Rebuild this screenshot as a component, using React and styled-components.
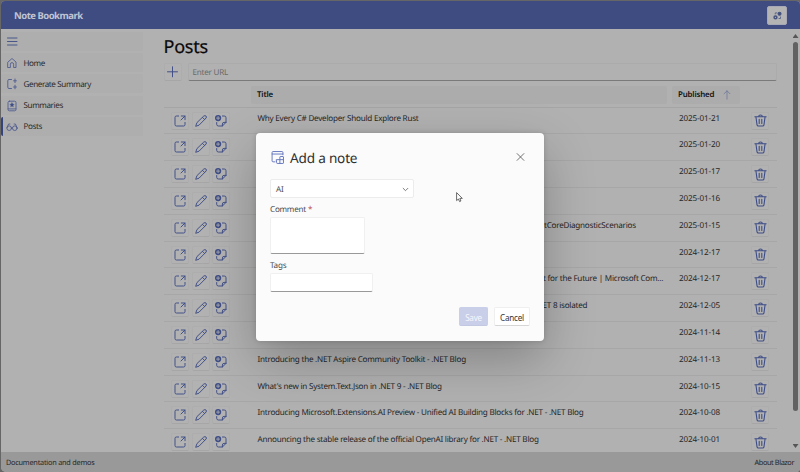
import React from 'react';
import styled, { createGlobalStyle } from 'styled-components';

const Global = createGlobalStyle`
  * { box-sizing: border-box; }
  body { margin: 0; background: #5c5c5c; overflow: hidden; }
  button, input, textarea { font: inherit; color: inherit; letter-spacing: inherit; }
`;

const blue = '#3d4c86';

const Shell = styled.div`
  position: relative;
  width: 800px;
  height: 472px;
  padding: 1px 0 0 1px;
  background: #666;
  font-family: 'Noto Sans', 'Open Sans', sans-serif;
  font-size: 8.1px;
  letter-spacing: -0.235px;
  text-rendering: geometricPrecision;
  color: #262626;
`;
const Frame = styled.div`
  display: flex;
  flex-direction: column;
  height: 471px;
  background: #b1b1b1;
  border-radius: 4px 4px 4px 5px;
  overflow: hidden;
`;
const Header = styled.header`
  flex: none;
  height: 28px;
  display: flex;
  align-items: center;
  justify-content: space-between;
  padding: 0 13px;
  background: #3e4c81;
`;
const Brand = styled.div`
  color: #c0c4d3;
  font-size: 9.5px;
  font-weight: 700;
  letter-spacing: -0.5px;
`;
const Settings = styled.button`
  width: 20px;
  height: 19px;
  padding: 0;
  display: grid;
  place-items: center;
  border: 1px solid #a6a9b5;
  border-radius: 2px;
  background: #b4b4b4;
`;
const Body = styled.div`
  flex: 1;
  min-height: 0;
  display: flex;
`;
const Nav = styled.nav`
  width: 142px;
  padding-top: 3px;
  display: flex;
  flex-direction: column;
  gap: 2.1px;
`;
const NavItem = styled.a`
  height: 19.1px;
  display: flex;
  align-items: center;
  gap: 5.5px;
  padding: 1px 0 0 3px;
  border-radius: 2px;
  background: #aeaeae;
  border-left: 2px solid ${(p) => (p.$active ? '#35437b' : 'transparent')};
  color: #2b2b2b;
  font-size: 8.1px;
  letter-spacing: -0.4px;
  svg { flex: none; }
`;
const Main = styled.main`
  flex: 1;
  min-width: 0;
  overflow: hidden;
  padding: 6px 15px 0 20.5px;
`;
const Title = styled.h1`
  margin: 0;
  height: 28px;
  line-height: 25px;
  font-size: 18px;
  font-weight: 400;
  -webkit-text-stroke: 0.2px #090909;
  letter-spacing: -0.25px;
  color: #090909;
`;
const AddRow = styled.div`
  display: flex;
  gap: 6px;
  height: 18px;
`;
const IconButton = styled.button`
  flex: none;
  width: 18px;
  height: 18px;
  padding: 0;
  display: grid;
  place-items: center;
  background: #b2b2b2;
  border: 1px solid #adadad;
  border-bottom-color: #a6a6a6;
  border-radius: 2px;
`;
const UrlField = styled.div`
  flex: 1;
  display: flex;
  align-items: center;
  padding: 1px 0 0 4px;
  color: #6a6a6a;
  border: 1px solid #ababab;
  border-bottom-color: #7a7a7a;
  border-radius: 2px;
`;
const Columns = styled.div`
  display: grid;
  grid-template-columns: 87px 416.5px 4.5px 68px 1fr;
  padding-top: 5px;
  height: 26.5px;
  border-bottom: 1px solid #a5a5a5;
`;
const ColumnHead = styled.div`
  grid-column: ${(p) => p.$col};
  height: 18px;
  display: flex;
  align-items: center;
  justify-content: space-between;
  padding: 0 8px 0 6.5px;
  background: #acacac;
  border-radius: 2px;
  font-size: 7.9px;
  font-weight: 600;
  letter-spacing: -0.17px;
  color: #111;
`;
const Row = styled.div`
  display: grid;
  grid-template-columns: 7.5px 86.5px 421.5px 72px 1fr;
  height: 26.82px;
  padding-top: 4px;
  border-bottom: 1px solid #a7a7a7;
`;
const Actions = styled.div`
  grid-column: 2;
  display: flex;
  gap: 2.7px;
`;
const Cell = styled.div`
  line-height: 13px;
  white-space: nowrap;
  padding-left: ${(p) => p.$indent || 0}px;
`;
const DateCell = styled(Cell)`
  letter-spacing: -0.13px;
`;
const Scrollbar = styled.div`
  width: 8px;
  display: flex;
  flex-direction: column;
  align-items: center;
  padding: 5px 1px 4px 0;
`;
const Arrow = styled.i`
  width: 6px;
  height: 4px;
  background: #565656;
  clip-path: ${(p) => (p.$down ? 'polygon(0 0, 100% 0, 50% 100%)' : 'polygon(50% 0, 100% 100%, 0 100%)')};
`;
const Thumb = styled.div`
  width: 5px;
  height: 369px;
  margin: 4px 0 auto;
  border-radius: 3px;
  background: #626262;
`;
const Footer = styled.footer`
  flex: none;
  height: 20px;
  display: flex;
  justify-content: space-between;
  align-items: center;
  padding: 1px 6px 0 5px;
  background: #999;
  font-size: 7.3px;
  letter-spacing: -0.27px;
`;
const FootNote = styled.span`
  letter-spacing: ${(p) => p.$ls}px;
`;
const Dialog = styled.section`
  position: absolute;
  left: 256px;
  top: 133px;
  width: 288px;
  height: 207.5px;
  display: flex;
  flex-direction: column;
  padding: 14px 14px 14.5px;
  border-radius: 4px;
  background: #fbfbfb;
  box-shadow: 0 19px 50px rgba(0, 0, 0, 0.26), 0 0 5px rgba(0, 0, 0, 0.16);
  color: #4c4c4c;
`;
const DialogHead = styled.div`
  height: 20px;
  display: flex;
  align-items: center;
  padding: 0 5px 0 1px;
`;
const DialogTitle = styled.h2`
  flex: 1;
  margin: 1px 0 0 6px;
  font-size: 13.6px;
  letter-spacing: -0.2px;
  line-height: 20px;
  font-weight: 400;
  color: #303030;
`;
const Select = styled.div`
  width: 143.5px;
  height: 19px;
  margin-top: 12px;
  display: flex;
  align-items: center;
  justify-content: space-between;
  padding: 1px 4px 0 5px;
  background: #fff;
  border: 1px solid #ececec;
  border-radius: 2px;
`;
const Label = styled.label`
  height: 11px;
  line-height: 11px;
  margin: ${(p) => p.$top}px 0 ${(p) => p.$bottom}px;
  span { color: #b9494c; }
`;
const Field = styled.div`
  flex: none;
  width: ${(p) => p.$w}px;
  height: ${(p) => p.$h}px;
  background: #fff;
  border: 1px solid #f0f0f0;
  border-bottom-color: #999;
  border-radius: 2px;
`;
const Buttons = styled.div`
  margin-top: auto;
  display: flex;
  justify-content: flex-end;
  gap: 6px;
`;
const Button = styled.button`
  width: ${(p) => (p.$primary ? 29 : 36)}px;
  height: 19px;
  padding: 1px 0 0;
  border-radius: 2px;
  border: 1px solid ${(p) => (p.$primary ? '#c9cfe8' : '#efefef')};
  border-bottom-color: ${(p) => (p.$primary ? '#c2c8e2' : '#d6d6d6')};
  background: ${(p) => (p.$primary ? '#c9cfe8' : '#fff')};
  color: ${(p) => (p.$primary ? '#f6f7fd' : '#333')};
`;
const Pointer = styled.svg`
  position: absolute;
  left: 456px;
  top: 192px;
`;

const Svg = ({ s = 12, w = 1, children, color = blue }) => (
  <svg width={s} height={s} viewBox="0 0 12 12" fill="none" stroke={color} strokeWidth={w} strokeLinecap="round" strokeLinejoin="round">
    {children}
  </svg>
);
const MenuIcon = () => <Svg><path d="M1.500 2h9.500M1.500 5.500h9.500M1.500 9h9.500" strokeWidth=".9" /></Svg>;
const HomeIcon = () => (
  <Svg w={0.9} color="#515e91"><path d="M2 5 6 1.500 10 5v5.500H7.600V7.200a1.600 1.600 0 0 0-3.200 0v3.300H2z" /></Svg>
);
const GenerateIcon = () => (
  <Svg w={0.95} color="#515e91">
    <path d="M5.500 1.500H3A1.200 1.200 0 0 0 1.800 2.700v6.600A1.200 1.200 0 0 0 3 10.500h2.500" />
    <path d="M9 1v3.600M7.600 2.800h2.800M9 7.200v3.600M7.600 9h2.800" />
  </Svg>
);
const SummaryIcon = () => (
  <Svg w={0.9} color="#515e91">
    <rect x="2" y="1.200" width="8" height="9.600" rx="1.400" />
    <path d="M2.200 8.900h7.600" />
    <path d="m6 2.800.7 1.300 1.400.2-1 1 .2 1.500L6 6.100l-1.300.7.2-1.500-1-1 1.400-.2z" fill={blue} strokeWidth=".5" />
  </Svg>
);
const GlassesIcon = () => (
  <Svg w={0.9} color="#515e91">
    <circle cx="3.200" cy="7.200" r="2.300" /><circle cx="8.800" cy="7.200" r="2.300" />
    <path d="M5.500 7h1M.9 6.800 2.600 3h1.300M11.100 6.800 9.400 3H8.100" />
  </Svg>
);
const OpenIcon = () => (
  <Svg w={0.95}>
    <path d="M4.600 1H2.400A1.400 1.400 0 0 0 1 2.400v7.200A1.400 1.400 0 0 0 2.400 11h7.200A1.400 1.400 0 0 0 11 9.600V7.400" />
    <path d="M7.300 1H11v3.700M11 1 7 5" />
  </Svg>
);
const EditIcon = () => (
  <Svg w={0.95}>
    <path d="M9 .9a1.500 1.500 0 0 1 2.100 2.100L4 10.200.7 11.300 1.800 8zM7.500 2.400l2.100 2.100" />
  </Svg>
);
const NoteIcon = () => (
  <Svg w={0.95}>
    <path d="M7.400 1h1.800A1.700 1.700 0 0 1 11 2.700V7.400L7.400 11H3.400A1.700 1.700 0 0 1 1.700 9.300V7.500M11 7.400H9A1.600 1.600 0 0 0 7.400 9v2" />
    <circle cx="3.100" cy="3.100" r="3.100" fill={blue} stroke="none" />
    <path d="M3.100 1.500v3.200M1.500 3.100h3.200" stroke="#b1b1b1" strokeWidth=".8" />
  </Svg>
);
const TrashIcon = () => (
  <Svg s={13}>
    <path d="M.8 2.600h10.400M4.300 2.500a1.700 1.600 0 0 1 3.400 0M1.800 2.800l1 7.200a1.200 1.200 0 0 0 1.200 1h4a1.200 1.200 0 0 0 1.200-1l1-7.200M4.800 4.800v4M7.200 4.800v4" />
  </Svg>
);
const PlusIcon = () => <Svg w={0.95}><path d="M5.500.8v10M.5 5.800h10" /></Svg>;
const GearsIcon = () => (
  <Svg s={9} color="#46547f">
    <circle cx="3.300" cy="8.400" r="1.900" strokeWidth="2" />
    <circle cx="8.700" cy="3.600" r="2" fill={blue} strokeWidth="1.400" />
    <path d="M3 4V2.500h2M10 8v2H8" />
  </Svg>
);
const WindowIcon = () => (
  <Svg s={13} w={0.9} color="#6778bf">
    <path d="M3.700 10H1.900A.9.900 0 0 1 1 9.100V1.400A.9.900 0 0 1 1.900.5h8.200a.9.900 0 0 1 .9.900v2.100M1 2.800h10" />
    <path d="M5.200 8h6.300v3a.5.500 0 0 1-.5.500H5.700a.5.500 0 0 1-.5-.5zM8.200 11.500V5.500a.4.400 0 0 1 .4-.4h2.500a.4.400 0 0 1 .4.400V8" />
  </Svg>
);

const navItems = [
  { icon: <MenuIcon /> },
  { icon: <HomeIcon />, text: 'Home' },
  { icon: <GenerateIcon />, text: 'Generate Summary' },
  { icon: <SummaryIcon />, text: 'Summaries' },
  { icon: <GlassesIcon />, text: 'Posts', active: true },
];
const posts = [
  ['Why Every C# Developer Should Explore Rust', '2025-01-21'],
  ['', '2025-01-20'],
  ['', '2025-01-17'],
  ['', '2025-01-16'],
  ['tCoreDiagnosticScenarios', '2025-01-15', 286.5],
  ['', '2024-12-17'],
  ['t for the Future | Microsoft Com...', '2024-12-17', 285.5],
  ['ET 8 isolated', '2024-12-05', 285],
  ['', '2024-11-14'],
  ['Introducing the .NET Aspire Community Toolkit - .NET Blog', '2024-11-13'],
  ["What's new in System.Text.Json in .NET 9 - .NET Blog", '2024-10-15'],
  ['Introducing Microsoft.Extensions.AI Preview - Unified AI Building Blocks for .NET - .NET Blog', '2024-10-08'],
  ['Announcing the stable release of the official OpenAI library for .NET - .NET Blog', '2024-10-01'],
];

export default function App() {
  return (
    <Shell>
      <Global />
      <Frame>
        <Header>
          <Brand>Note Bookmark</Brand>
          <Settings><GearsIcon /></Settings>
        </Header>
        <Body>
          <Nav>
            {navItems.map((n, i) => (
              <NavItem key={i} $active={n.active}>{n.icon}{n.text}</NavItem>
            ))}
          </Nav>
          <Main>
            <Title>Posts</Title>
            <AddRow>
              <IconButton><PlusIcon /></IconButton>
              <UrlField>Enter URL</UrlField>
            </AddRow>
            <Columns>
              <ColumnHead $col={2}>Title</ColumnHead>
              <ColumnHead $col={4}>
                Published
                <Svg s={10} w={0.9} color="#6c7599"><path d="M6 11V1M2.500 4.500 6 1l3.500 3.500" /></Svg>
              </ColumnHead>
            </Columns>
            {posts.map(([title, date, indent], i) => (
              <Row key={i}>
                <Actions>
                  <IconButton><OpenIcon /></IconButton>
                  <IconButton><EditIcon /></IconButton>
                  <IconButton><NoteIcon /></IconButton>
                </Actions>
                <Cell $indent={indent}>{title}</Cell>
                <DateCell>{date}</DateCell>
                <IconButton><TrashIcon /></IconButton>
              </Row>
            ))}
          </Main>
          <Scrollbar><Arrow /><Thumb /><Arrow $down /></Scrollbar>
        </Body>
        <Footer>
          <FootNote $ls={-0.22}>Documentation and demos</FootNote>
          <FootNote $ls={-0.4}>About Blazor</FootNote>
        </Footer>
      </Frame>
      <Dialog>
        <DialogHead>
          <WindowIcon />
          <DialogTitle>Add a note</DialogTitle>
          <Svg s={9} w={1.1} color="#555"><path d="m1.500.8 9 9M10.500.8l-9 9" /></Svg>
        </DialogHead>
        <Select>AI<Svg s={7} w={1.3} color="#555"><path d="m2 4 4 4 4-4" /></Svg></Select>
        <Label $top={6} $bottom={2}>Comment <span>*</span></Label>
        <Field $w={95} $h={37} />
        <Label $top={6} $bottom={2}>Tags</Label>
        <Field $w={103} $h={19} />
        <Buttons>
          <Button $primary>Save</Button>
          <Button>Cancel</Button>
        </Buttons>
      </Dialog>
      <Pointer width="7" height="11" viewBox="0 0 7 11">
        <path d="M.6.6v8l1.800-1.600L3.600 9.600l1.300-.6L3.800 6.400h2.500z" fill="#fff" stroke="#444" strokeWidth=".8" />
      </Pointer>
    </Shell>
  );
}
